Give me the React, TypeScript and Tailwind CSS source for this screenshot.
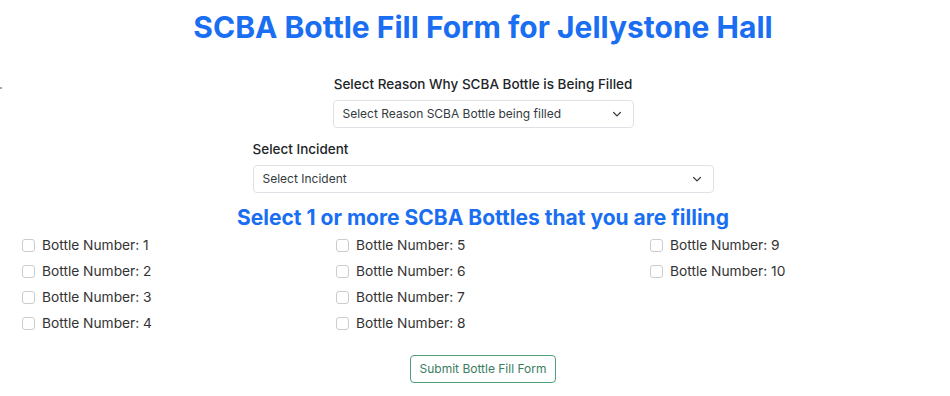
import React from "react"

const bottles = [1, 2, 3, 4, 5, 6, 7, 8, 9, 10]

function Chevron() {
  return (
    <svg width="12" height="12" viewBox="0 0 16 16" fill="none" className="shrink-0">
      <path d="M3.5 6l4.5 4.5L12.5 6" stroke="#343a40" strokeWidth="1.6" strokeLinecap="round" strokeLinejoin="round" />
    </svg>
  )
}

function FakeSelect({ text, className }: { text: string; className: string }) {
  return (
    <div
      className={`flex h-[28px] items-center justify-between rounded-[4px] border border-[#dee2e6] bg-white pl-[9px] pr-[10px] text-[12px] text-[#343a40] ${className}`}
    >
      <span>{text}</span>
      <Chevron />
    </div>
  )
}

export default function App() {
  const cols = [bottles.slice(0, 4), bottles.slice(4, 8), bottles.slice(8)]

  return (
    <div className="relative min-h-[396px] w-full bg-white font-['Inter',sans-serif] text-[#212529]">
      <div className="absolute left-0 top-[87px] h-[2px] w-[2px] rounded-full bg-[#888]" />

      <div className="pl-[16px]">
        <h1 className="pt-[9px] text-center text-[30px] font-bold leading-[36px] text-[#1a6ef2]">
          SCBA Bottle Fill Form for Jellystone Hall
        </h1>

        <div className="mt-[29px] flex flex-col items-center">
          <label className="text-[13.5px] font-medium leading-[20px]">Select Reason Why SCBA Bottle is Being Filled</label>
          <FakeSelect text="Select Reason SCBA Bottle being filled" className="mt-[6px] w-[301px]" />
        </div>

        <div className="mx-auto mt-[11px] w-[461px]">
          <label className="block text-[13.5px] font-medium leading-[20px]">Select Incident</label>
          <FakeSelect text="Select Incident" className="mt-[6px] w-full" />
        </div>

        <h2 className="mt-[11px] text-center text-[21px] font-bold leading-[28px] text-[#1a6ef2]">
          Select 1 or more SCBA Bottles that you are filling
        </h2>
      </div>

      <div className="grid grid-cols-[314px_314px_314px] px-[4px]">
        {cols.map((col, i) => (
          <div key={i} className="flex flex-col">
            {col.map((n) => (
              <label key={n} className="flex h-[26px] items-center pl-[18px] text-[13.75px] text-[#333]">
                <span className="mr-[7px] h-[13px] w-[13px] rounded-[3px] border border-[#c9cdd1] bg-white" />
                Bottle Number: {n}
              </label>
            ))}
          </div>
        ))}
      </div>

      <div className="mt-[19px] flex justify-center pl-[16px]">
        <button className="h-[28px] rounded-[4px] border border-[#4f9f7b] px-[9px] text-[12px] text-[#3b7d5f]">
          Submit Bottle Fill Form
        </button>
      </div>
    </div>
  )
}
